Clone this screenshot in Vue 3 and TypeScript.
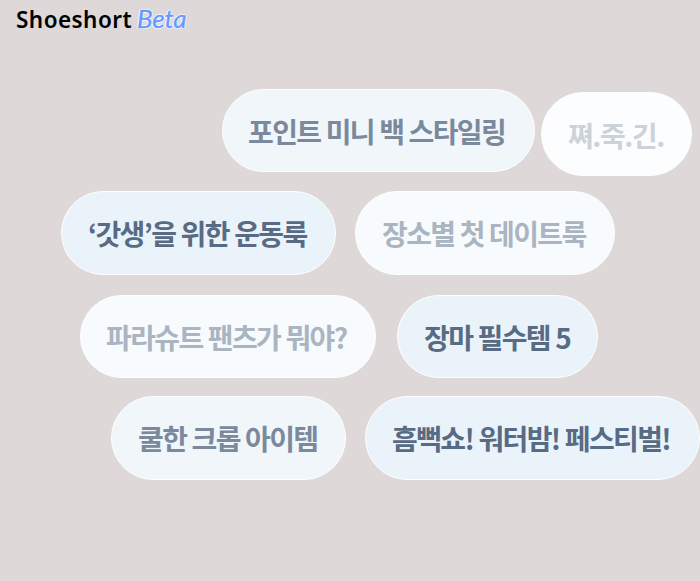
<script setup lang="ts">
interface Tag {
  label: string
  tone: 'strong' | 'medium' | 'soft' | 'faint'
  width: number
}

const rows: Tag[][] = [
  [
    { label: '포인트 미니 백 스타일링', tone: 'medium', width: 313 },
    { label: '쪄.죽.긴.', tone: 'faint', width: 151 },
  ],
  [
    { label: '‘갓생’을 위한 운동룩', tone: 'strong', width: 275 },
    { label: '장소별 첫 데이트룩', tone: 'soft', width: 260 },
  ],
  [
    { label: '파라슈트 팬츠가 뭐야?', tone: 'soft', width: 296 },
    { label: '장마 필수템 5', tone: 'strong', width: 201 },
  ],
  [
    { label: '쿨한 크롭 아이템', tone: 'medium', width: 235 },
    { label: '흠뻑쇼! 워터밤! 페스티벌!', tone: 'strong', width: 335 },
  ],
]
</script>

<template>
  <div class="page">
    <header class="brand">
      <span class="name">Shoeshort</span>
      <span class="beta">Beta</span>
    </header>
    <main class="cloud">
      <div v-for="(row, i) in rows" :key="i" class="row" :class="`row-${i + 1}`">
        <button
          v-for="tag in row"
          :key="tag.label"
          type="button"
          class="tag"
          :class="tag.tone"
          :style="{ width: tag.width + 'px' }"
        >
          {{ tag.label }}
        </button>
      </div>
    </main>
  </div>
</template>

<style>
body {
  margin: 0;
  background: #ded8d8;
}
</style>

<style scoped>
.page {
  width: 700px;
  height: 581px;
  overflow: hidden;
  background: #ded8d8;
}
.brand {
  display: flex;
  align-items: flex-start;
  gap: 4px;
  height: 38px;
  padding-left: 16px;
  box-sizing: border-box;
}
.name {
  width: 117px;
  font: 600 22.5px/40px 'Noto Sans', sans-serif;
  letter-spacing: 0.45px;
  white-space: nowrap;
  color: #000;
}
.beta {
  font: italic 400 26px/37px Lato, sans-serif;
  letter-spacing: -0.2px;
  color: #6699ff;
  -webkit-text-stroke: 0.4px #6699ff;
  text-shadow: 1px 0 #fff, -1px 0 #fff, 0 1px #fff, 0 -1px #fff;
}
.cloud {
  display: flex;
  flex-direction: column;
  padding-top: 51px;
}
.row {
  display: flex;
  align-items: flex-start;
}
.row-1 {
  height: 102px;
  padding-left: 222px;
  gap: 6px;
}
.row-2 {
  height: 104px;
  padding-left: 61px;
  gap: 19px;
}
.row-3 {
  height: 101px;
  padding-left: 80px;
  gap: 21px;
}
.row-4 {
  padding-left: 111px;
  gap: 19px;
}
.tag {
  box-sizing: border-box;
  flex: none;
  height: 84px;
  padding: 0 0 0 26px;
  border: 1px solid #fff;
  border-radius: 42px;
  font: 700 28px/82px 'Noto Sans CJK KR', sans-serif;
  letter-spacing: -1.62px;
  word-spacing: 0.5px;
  text-align: left;
  white-space: nowrap;
}
.row-1 .tag,
.row-3 .tag {
  height: 83px;
}
.row-1 .medium,
.row-3 .soft {
  padding-left: 25px;
}
.row-1 .faint {
  height: 84px;
  margin-top: 3px;
  padding-top: 1px;
  letter-spacing: -1.45px;
}
.strong {
  background: #ebf3fa;
  color: #586b84;
}
.medium {
  background: #f1f6fb;
  color: #7b899d;
}
.soft {
  background: #f7fbfe;
  color: #abb4c1;
}
.faint {
  background: #fbfdff;
  color: #cdd2d9;
}
</style>
